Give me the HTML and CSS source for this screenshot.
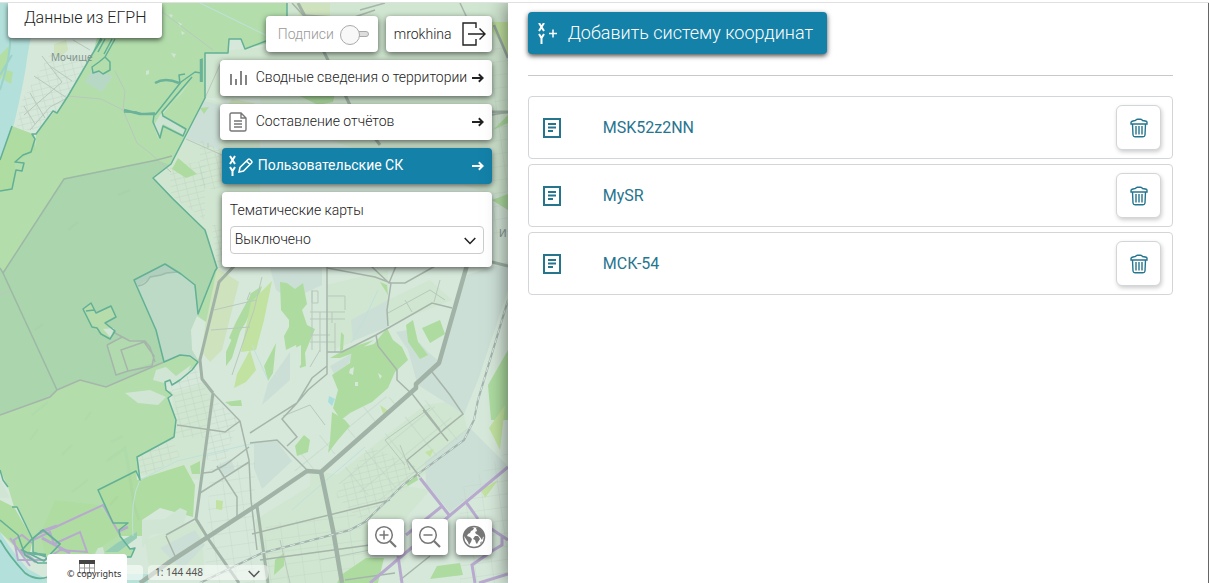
FILE: index.html
```html
<!DOCTYPE html>
<html lang="ru">
<head>
<meta charset="utf-8">
<meta name="viewport" content="width=device-width, initial-scale=1">
<title>Пользовательские СК</title>
<link rel="stylesheet" href="styles.css">
</head>
<body>
<svg class="sprite" aria-hidden="true">
  <symbol id="arrow" viewBox="0 0 12 10"><path d="M0 5H10.500M6.800 1.200L10.700 5L6.800 8.800" fill="none" stroke="currentColor" stroke-width="1.900"/></symbol>
  <symbol id="chevron" viewBox="0 0 12 8"><path d="M.7 1L6 6.500L11.300 1" fill="none" stroke="currentColor" stroke-width="1.500"/></symbol>
  <symbol id="sheet" viewBox="0 0 18 20"><path d="M1 1H17V19H1Z" fill="none" stroke="currentColor" stroke-width="2"/><path d="M5 6H13M5 9.500H13M5 13H10" stroke="currentColor" stroke-width="2"/></symbol>
  <symbol id="trash" viewBox="0 0 18 20"><g fill="none" stroke="currentColor" stroke-width="1.400"><path d="M1 6V4.500Q1 3.500 3 3Q5 2.600 5.500 2.500Q6 1.200 7.500 1.200H10.500Q12 1.200 12.500 2.500Q16 3 16.500 3.400Q17 3.800 17 4.500V6Z"/><path d="M2.500 6L3 17Q3.200 18.800 5 18.800H13Q14.800 18.800 15 17L15.500 6"/><path d="M6 8V16.500M9 8V16.500M12 8V16.500"/></g></symbol>
</svg>
<div class="app">
  <section class="map" aria-label="Карта">
    <svg class="map-canvas" viewBox="0 3 508 580" preserveAspectRatio="xMinYMin slice" aria-hidden="true">
      <defs>
        <pattern id="grid" width="9" height="6" patternUnits="userSpaceOnUse" patternTransform="rotate(-14)"><path d="M0 0H9M0 0V6" stroke="#bccfbf" fill="none" stroke-width=".7"/></pattern>
        <pattern id="blocks" width="26" height="19" patternUnits="userSpaceOnUse" patternTransform="rotate(-39)"><path d="M0 0H26M0 0V19" stroke="#bdd2c1" fill="none"/></pattern>
        <pattern id="yards" width="17" height="13" patternUnits="userSpaceOnUse" patternTransform="rotate(-8)"><path d="M0 0H17M0 0V13" stroke="#c2d4c5" fill="none" stroke-width=".8"/></pattern>
      </defs>
      <path d="M0 3H508V583H0Z" fill="#d6e8da"/>
      <g fill="#d0e6d0">
        <path d="M288 3H508V200L205 98V53L288 44ZM172 393L205 383L215 395L206 440L174 437ZM205 98L153 178L217 268H260V98Z"/>
        <path d="M330 480L425 405L460 400L470 440L350 530H330ZM175 395L215 395L203 480L140 475L137 457L174 437ZM310 583V470L430 490L350 583ZM145 540L200 520L205 575H150ZM327 285L388 270V325L345 345L327 352ZM388 300L430 280L452 300L388 325ZM255 520L320 480L335 583H265Z"/>
      </g>
      <g fill="#ccdfd6">
        <path d="M204 101L220 105V150L186 139Z"/>
        <path d="M270 268H322V285L290 300L276 290ZM351 320L388 300L388 327L353 341ZM467 275L508 262V290L478 380L464 414L418 385L438 362Z"/>
        <path d="M254 442L276 440L292 461L262 489L254 468ZM425 462L470 428L508 466L450 512L426 484Z"/>
        <path d="M268 383L290 352V380L262 405ZM396 332L408 330L428 352L440 362L417 383L408 350ZM160 548L195 530L205 545L182 570ZM218 465L231 459L235 470L223 476ZM330 366L358 350L348 364L334 374Z"/>
      </g>
      <g fill="#cde2bd">
        <path d="M217 268L239 282L222 350L210 362L200 350L198 314ZM232 99L254 103V112L226 108ZM295 3H330V16H300ZM54 44L66 40L68 50L59 58L54 54Z"/>
      </g>
      <g fill="url(#grid)">
        <path d="M176 392L208 394L238 420L225 462L206 460V438L174 437ZM138 457L172 439L180 456L153 473L141 475ZM170 383L194 366L205 383V410L178 412ZM170 168L205 160V220L171 195ZM212 225H222V268H217ZM22 100L50 54L90 58L67 98L40 130H16Z"/>
        <path d="M335 495L370 447L420 468L410 485L360 520ZM200 140L222 150V190L200 188Z"/>
      </g>
      <path d="M330 480L425 400L470 430L380 500ZM342 422L380 395L400 400L340 450L300 480L285 455Z" fill="url(#blocks)"/>
      <path d="M265 525L355 510L380 583H265ZM210 462H255V583H205ZM460 490L508 450V583H460ZM492 40H508V240H494Z" fill="url(#yards)"/>
      <path d="M0 3H39Q29 42 26 66Q23 86 14 124L0 160Z" fill="#b3e0db"/>
      <path d="M0 55L9 46L7 70L0 80ZM6 70L13 72L11 84L4 80Z" fill="#b3dfa5"/>
      <path d="M0 532Q12 552 28 569Q48 580 52 583H0Z" fill="#b3e0db"/>
      <path d="M52 574H148V583H40Z" fill="#b8e2d8"/>
      <path d="M10 25Q13 50 0 90M0 75L12 55" fill="none" stroke="#9bd2ca" stroke-width="2"/>

      <path d="M103 3L97 38L93 53L68 96L57 113L53 113L36 134L35 150L23 155L15 162V175L12 189L0 191V470L8 487L14 507L18 508L33 540V551L46 557L131 557L135 548L130 549L120 536L119 530L128 523H113L98 490L136 471L140 475L137 457L163 443L174 437L176 420L168 398L172 392L166 390L165 382L180 380L198 362L217 268L205 230L153 178L171 164L205 98V53L228 53L229 39H241L245 49L287 38V3Z" fill="#b3deac"/>
      <path d="M0 268L3 273L64 179L157 160L170 165L153 178L205 230L217 268L198 314L194 285L181 274L165 264L134 280L156 330L164 362L106 387L80 380L57 390L50 397L0 415Z" fill="#aad5ad"/>
      <path d="M107 345L122 338L147 342L155 362L128 371L116 375Z" fill="#b1dbae"/>
      <path d="M12 126L33 134L36 150L15 162V175L12 189L0 191V160ZM137 480L184 465L195 485L193 517L160 508L142 520L142 536L120 536L113 523L98 490L136 471ZM0 500L14 507L33 540L28 560L0 532ZM55 500L98 505L113 523L119 535L88 556L46 557L40 535Z" fill="#afdca0"/>
      <path d="M134 280L165 264L181 274L194 285L198 314L191 330L192 350L198 360L180 355L164 362L156 330Z" fill="#bcdac6"/>
      <path d="M191 330L197 316L206 322L202 348L198 360L192 350Z" fill="#d6e8da"/>
      <path d="M134 280L165 264L177 271L163 275L150 278L138 286Z" fill="#b1cfbd"/>
      <path d="M138 286Q146 285 150 277L161 275L166 273L177 272" fill="none" stroke="#9dbdab" stroke-width="1.500"/>
      <path d="M92 70L113 76L102 92L85 82Z" fill="#b7d8c4"/>
      <path d="M181 94L160 115L154 125L158 138L163 124L184 135L186 131L162 115L190 82Z" fill="#cbe3d0"/>
      <path d="M83 309L91 303L96 313L111 306L116 317L105 323L115 331L110 339L101 334L92 327Z" fill="#b5dcaa"/>
      <path d="M103 329L114 328L111 338ZM156 370L166 367L176 376L191 365L186 377L168 384L153 380ZM125 393L150 390L166 397L158 405L138 403ZM142 520L165 519L180 508L187 511L182 530L151 535L142 548ZM98 548L103 547L105 556H94ZM171 53L176 54L174 58ZM169 14L173 15L171 18ZM178 22L182 24L180 27ZM181 31L185 33L182 35ZM146 71L149 70V74L146 75ZM0 480L10 498H0Z" fill="#d0e5d3"/>
      <path d="M117 543L137 532L137 538L118 552L105 552Z" fill="#94cdb4"/>
      <path d="M107 461L125 448L129 471L134 505L139 520" fill="none" stroke="#a5cfa3" stroke-width="3" opacity=".3"/>
      <path d="M30 440L38 429M62 455L72 445M85 420L91 412M32 415L48 402M111 442L123 436M72 492L88 480M68 230L78 222M110 505L118 496M35 330L43 324M118 195L130 190" stroke="#a4cfa3" stroke-width="2" opacity=".25"/>

      <g fill="#aedca0">
        <path d="M280 282L287 283L295 289L303 283L307 304L302 310L307 325L315 329L305 353L306 366L300 368L296 345L286 350L284 336L289 327V320L281 310ZM250 294L262 286L258 300L252 310ZM236 322L250 296L255 300L246 322L234 342L229 338ZM226 352L236 330L240 332L232 358L226 366ZM264 366L276 343L273 373L268 381Z"/>
        <path d="M332 375L350 363L352 350L374 344L387 328L393 340L402 347L408 360L395 372L388 388L372 402L350 413L341 420L333 408L338 390ZM330 358L346 349L374 340L356 352L340 358Z"/>
        <path d="M422 328L440 320L445 334L430 343ZM406 325L413 320L418 342L428 355L420 359L408 342ZM341 332L344 335L343 350L340 352Z"/>
        <path d="M332 412L345 420L350 426L338 440L328 453L330 440ZM295 446L304 435L310 440L308 452L297 456ZM341 575L366 558H384L378 583H337ZM437 566L460 563L463 575L430 579ZM405 482L416 474L418 480L408 486ZM172 169L178 158L197 174L186 178ZM225 402L241 400L242 406L231 406ZM488 385L508 350V420H491ZM200 108L209 107L204 114ZM298 95L335 93L333 102L318 105ZM492 200L508 194V210ZM493 130L508 115V123ZM190 466L200 461V474H192ZM380 282L387 285L388 295ZM275 560L284 553V566L274 575Z"/>
      </g>
      <g fill="#c1e2a0">
        <path d="M251 302L272 281L264 320L256 350L241 352ZM237 374L250 350L256 370L246 382L234 388ZM425 452L434 449L430 457ZM481 490L498 480L485 498ZM489 428L505 405L500 450ZM487 22H508V55ZM216 500L223 501L222 510L216 509ZM380 405L390 412L384 416Z"/>
      </g>
      <path d="M350 369L354 367L353 375L349 373ZM355 382H358V386H355ZM378 373L382 376L380 379ZM290 351L301 345L301 365L294 370ZM330 399L335 393L333 408Z" fill="#d6e8da"/>
      <path d="M329 396L335 399L332 406L328 402Z" fill="#a9dedd"/>
      <path d="M133 536Q130 500 140 480L177 461L255 443M292 510L309 495L365 447M268 380L252 345M351 343L365 318L378 290M200 3L292 48" fill="none" stroke="#bfe1db"/>

      <g fill="none" stroke="#b8c9bc" stroke-width="1">
        <path d="M68 96L101 99L123 110L137 143L150 153L171 172M115 71L125 91L123 110M67 98L50 107L30 130M73 40L90 50M157 8L213 50M205 98L222 60M186 139L222 155M208 143V148M0 295L10 291M312 290V350M318 291V303H312V291ZM328 296H345V310M310 312H345M310 319H345M320 312V352M332 312V323M310 335H330M310 342H335M335 323V352M310 367L320 350M388 313L430 290L445 300M405 300L412 312M440 280L434 302M405 465L385 440L430 408M400 445L410 470M283 416L310 405L325 425M280 540L290 583M320 560L395 545M250 292L247 300M262 277L254 310M214 310L256 300M211 330L250 327M232 375L254 310"/>
        <path d="M42 56L62 82L24 115M34 76L67 98M30 93L45 118M50 66L72 81M24 106L35 124"/>
      </g>
      <g fill="none" stroke="#a6b5aa" stroke-width="1.500">
        <path d="M107 345L122 337L130 341H145L150 347L155 362M107 345L116 375L128 371L121 350L144 342L154 356L152 366L128 371M113 332L130 341"/>
        <path d="M0 415L50 397L57 390L80 380L106 387L164 362"/>
        <path d="M3 273L57 390M0 268L3 273L64 179L157 160L172 156" stroke="#9db8a5"/>
        <path d="M177 425L225 432L240 421M203 473L212 472L225 465L249 447M200 493L249 462M217 466L237 497V517M213 393L240 421L249 460L251 500L257 550M250 443L277 440L308 471M166 535L195 519M166 536L175 556"/>
        <path d="M327 260V374L308 390L297 403L250 433M327 268L375 277L391 283L405 283L437 265M371 266L389 283L396 266M391 283L387 310L388 326M327 352H342L376 335L432 303L452 308M376 335L378 346L397 370V380L413 395L440 430M327 366L312 378L297 403L282 419L297 437L287 446M432 372L450 395L463 414L443 430M423 410L448 441M463 414L407 460L420 477M252 534L390 500M260 560L370 545M345 580L395 573M400 580L430 556"/>
        <path d="M292 3L303 15L335 17M340 22L375 10M360 10L385 3M460 3L482 50M492 115L508 112"/>
      </g>
      <g fill="none" stroke="#a1b3a6" stroke-linejoin="round">
        <path d="M467 265L439 363L416 384L416 388L321 472L307 471L257 505L168 563L140 583" stroke-width="4.500"/>
        <path d="M321 472L333 530L342 583" stroke-width="4.500"/>
        <path d="M213 393L196 519L209 540L239 583M257 506L268 583M213 393L202 379L200 360L219 282L238 262M298 3L323 50L350 105L380 145M492 112H508M492 262L508 266" stroke-width="3"/>
      </g>
      <path d="M508 300L478 400L474 420L464 440L403 485L365 522L350 530L320 538L262 553L200 583" fill="none" stroke="#a3b4ae" stroke-width="2"/>
      <path d="M508 300L478 400L474 420L464 440L403 485L365 522L350 530L320 538L262 553L200 583" fill="none" stroke="#dbe9e0" stroke-dasharray="5 5"/>
      <path d="M494 25L508 58" stroke="#9aaba4" stroke-width="2.500"/>

      <g fill="none" stroke="#b7aace" stroke-width="2">
        <path d="M38 534L60 525L103 505L120 535M33 540L50 532L54 544L80 532L87 552L60 550L45 560L18 560L14 540L22 535L32 543M10 538L30 566"/>
        <path d="M420 478L449 515M508 467L448 517L370 583M441 507L406 535M466 502L478 519M398 556L402 583M475 583L472 565L492 551L502 545V535M490 528L508 540M479 583L508 574" stroke-width="3"/>
      </g>
      <path d="M40 532L57 526M42 538L70 553M20 550L36 562M119 531L128 527" stroke="#b7aace" stroke-width="3"/>
      <g fill="none" stroke="#62b096" stroke-width="1.500" stroke-linejoin="round">
        <path d="M101 38L93 53L68 96L57 113L53 111L36 134L32 134L35 139L31 152L23 155L15 162L24 163L22 171L16 170L12 189L0 191M115 39L105 57L110 62V70L103 74L99 71L93 73L92 67L99 62L105 57M98 52L105 39M104 54L112 39M93 53L102 39"/>
        <path d="M287 3V18M266 41L245 49L241 39H229L228 53H205V98L171 164L153 178L173 199L205 230L217 268L215 271L198 314L195 285L181 274L165 264L134 280L156 330L164 362L180 355L190 356L198 362L192 370L180 380L172 385L170 380L165 382L166 390L172 395L168 398L176 420L174 437L163 443L137 457L140 480L136 471L98 490L113 523L128 523L119 530L120 536L130 549L135 548L131 557H100"/>
        <path d="M181 82L195 72L201 73L202 59V82M155 115L181 82M124 112L136 112L142 114L155 113M180 84L179 75L185 74M154 115L153 122L160 138L163 126L183 136L186 129L163 116L162 112L192 77"/>
        <path d="M83 309L91 303L96 313L111 306L116 317L105 323L115 331L110 339L101 334L97 328L92 327ZM86 311L94 310"/>
        <path d="M0 470L3 480L8 487M12 507H17L33 540L33 552L46 557M0 520L18 535L25 555L38 563H48M12 126L0 160"/>
        <path d="M0 540Q9 556 25 573Q36 581 48 577M31 540L43 530L60 544L44 561L22 550Z" stroke-width="1.800"/>
      </g>
      <path d="M155 83Q165 77 179 83M124 110L140 114L155 114M28 553L46 555M201 59V82" stroke="#6bb29a" stroke-width="2.500" fill="none"/>
      <text class="place" x="51" y="61">Мочище</text>
      <text class="place" x="499" y="237">И</text>
    </svg>

    <div class="map-ui">
      <div class="top-bar">
        <button class="tab">Данные из ЕГРН</button>
        <div class="tools">
          <div class="tools-head">
            <label class="float toggle">Подписи <input class="switch" type="checkbox" disabled></label>
            <button class="float user">mrokhina
              <svg width="24" height="24" viewBox="0 0 24 24" fill="none" stroke="currentColor" stroke-width="1.400" aria-hidden="true"><path d="M14 6V1H1V23H14V17M6 12H23M17.500 6.500L23 12L17.500 17.500"/></svg>
            </button>
          </div>
          <button class="float row">
            <svg class="row-icon" viewBox="0 0 18 18" aria-hidden="true"><path d="M2 5V16M7 10V16M12 2V16M17 6V16" stroke="currentColor" stroke-width="1.800"/></svg>
            <span class="row-text">Сводные сведения о территории</span><svg class="arrow" aria-hidden="true"><use href="#arrow"/></svg>
          </button>
          <button class="float row">
            <svg class="row-icon" viewBox="0 0 18 20" fill="none" stroke="currentColor" stroke-width="1.400" aria-hidden="true"><path d="M2.500 1H12L17 6V17.500Q17 19 15.500 19H2.500Q1 19 1 17.500V2.500Q1 1 2.500 1ZM12 1V6H17M5 9H13M5 12H13M5 15H13"/></svg>
            <span class="row-text">Составление отчётов</span><svg class="arrow" aria-hidden="true"><use href="#arrow"/></svg>
          </button>
          <button class="float row active">
            <svg class="edit-icon" viewBox="0 0 24 22" fill="none" stroke="currentColor" stroke-width="1.500" aria-hidden="true"><path d="M1 1L6 9M6 1L1 9" stroke-width="2"/><path d="M1 12L3.500 16L6 12M3.500 16V21" stroke-width="2"/><path d="M10 17L11 12.500L19 4.500Q20 3.500 21 4.500L22.500 6Q23.500 7 22.500 8L14.500 16ZM17.500 6L21 9.500"/></svg>
            <span class="row-text">Пользовательские СК</span><svg class="arrow" aria-hidden="true"><use href="#arrow"/></svg>
          </button>
          <div class="float themes">
            <label for="theme">Тематические карты</label>
            <div class="select-wrap">
              <select id="theme"><option>Выключено</option></select>
              <svg class="chevron" aria-hidden="true"><use href="#chevron"/></svg>
            </div>
          </div>
        </div>
      </div>
      <div class="bottom">
        <div class="zoom-bar">
          <button class="float square" aria-label="Приблизить"><svg viewBox="0 0 24 24" aria-hidden="true"><circle cx="10" cy="10" r="8.300"/><path d="M5.500 10H14.500M10 5.500V14.500"/><path d="M16 16L22 22" stroke-width="2.200"/></svg></button>
          <button class="float square" aria-label="Отдалить"><svg viewBox="0 0 24 24" aria-hidden="true"><circle cx="10" cy="10" r="8.300"/><path d="M5.500 10H14.500"/><path d="M16 16L22 22" stroke-width="2.200"/></svg></button>
          <button class="float square" aria-label="Вся карта"><svg viewBox="0 0 24 24" aria-hidden="true"><circle cx="12" cy="12" r="10.500"/><path class="land" d="M2 8L5 4L9 2L12 3L11 5L9 6L8 8L6 9L5 11L8 12L10 14L9 17L7 20L6 17L4 14L2 11ZM14 3L18 3L21 7L23 11L21 12L20 15L18 12L16 10L14 9L13 7L15 6ZM13 11L16 11L18 14L16 17L15 19L14 18L13 15L11 14ZM18 18L20 16L19 19Z"/></svg></button>
        </div>
        <div class="status">
          <div class="copy"><button class="copy-card" aria-label="Таблица"><svg width="16" height="14" viewBox="0 0 16 14" aria-hidden="true"><path d="M.5 1H15.500V13H.5ZM.5 8H15.500M5.500 4V13M10.500 4V13" fill="none" stroke="#999"/><path d="M0 0H16V4H0Z" fill="#444"/></svg></button><span class="copy-text">© copyrights</span></div>
          <div class="scale"><select aria-label="Масштаб"><option>1: 144 448</option></select><svg class="chevron" aria-hidden="true"><use href="#chevron"/></svg></div>
        </div>
      </div>
    </div>
  </section>

  <main class="panel">
    <button class="add">
      <svg width="20" height="21" viewBox="0 0 20 21" fill="none" stroke="currentColor" aria-hidden="true"><path d="M1 0L6 8M6 0L1 8M1 11L3.500 15L6 11M3.500 15V21" stroke-width="2"/><path d="M11 10.500H19M15 6.500V14.500" stroke-width="1.500"/></svg>
      Добавить систему координат
    </button>
    <hr class="rule">
    <ul class="list">
      <li class="item"><svg class="sheet" aria-hidden="true"><use href="#sheet"/></svg><span class="name">MSK52z2NN</span><button class="delete" aria-label="Удалить MSK52z2NN"><svg aria-hidden="true"><use href="#trash"/></svg></button></li>
      <li class="item"><svg class="sheet" aria-hidden="true"><use href="#sheet"/></svg><span class="name">MySR</span><button class="delete" aria-label="Удалить MySR"><svg aria-hidden="true"><use href="#trash"/></svg></button></li>
      <li class="item"><svg class="sheet" aria-hidden="true"><use href="#sheet"/></svg><span class="name">МСК-54</span><button class="delete" aria-label="Удалить МСК-54"><svg aria-hidden="true"><use href="#trash"/></svg></button></li>
    </ul>
  </main>
</div>
</body>
</html>
```
FILE: styles.css
```css
* { box-sizing: border-box; }
body {
  margin: 0;
  padding-top: 2px;
  min-height: 100vh;
  display: flex;
  background: #fff;
  color: #222;
  font: 300 14px/18px Roboto, "Noto Sans", sans-serif;
}
button, select { font: inherit; color: inherit; border: 0; padding: 0; background: none; }
svg { display: block; flex: none; }
.sprite { position: absolute; width: 0; height: 0; }

.app { flex: 1; display: grid; grid-template-columns: 42% 1fr; overflow: hidden; border-top: 1px solid #e0e0e0; }

.map { position: relative; display: flex; overflow: hidden; background: #d6e8da; }
.map-canvas { position: absolute; inset: 0; width: 100%; height: 100%; }
.place { font: 400 10px "Noto Sans", sans-serif; fill: #82958f; stroke: none; }
.map-ui { position: relative; flex: 1; display: flex; flex-direction: column; justify-content: space-between; }
.top-bar { display: flex; justify-content: space-between; align-items: flex-start; padding: 0 16px 0 8px; }
.tab {
  height: 35px;
  padding: 0 16px 6px;
  background: #fff;
  border-radius: 0 0 4px 4px;
  box-shadow: 0 2px 5px rgba(0, 0, 0, .6);
  font-size: 16px;
}
.tools { display: flex; flex-direction: column; align-items: flex-end; gap: 8px; width: 272px; padding-top: 13px; }
.tools-head { display: flex; gap: 8px; }
.float { background: #fff; border-radius: 4px; box-shadow: 0 2px 6px rgba(0, 0, 0, .6); }
.toggle { display: flex; align-items: center; gap: 6px; width: 112px; height: 36px; padding-left: 12px; color: #999; }
.switch { appearance: none; position: relative; width: 30px; height: 18px; margin: 0; }
.switch::before { content: ""; position: absolute; inset: 6px 1px 6px 12px; border: 1px solid #aaa; border-radius: 3px; background: #ddd; }
.switch::after { content: ""; position: absolute; left: 0; top: 0; width: 18px; height: 18px; border: 1px solid #aaa; border-radius: 50%; background: #f8f8f8; }
.user { display: flex; align-items: center; justify-content: space-between; width: 106px; height: 36px; padding: 0 6px 0 8px; }
.row { display: flex; align-items: center; width: 100%; height: 36px; padding: 0 8px 0 9px; text-align: left; }
.row-icon { width: 18px; height: 20px; margin-right: 9px; color: #777; }
.row-text { flex: 1; white-space: nowrap; padding-bottom: 2px; }
.arrow { width: 12px; height: 10px; }
.active { width: 270px; padding-left: 7px; background: #1481a8; color: #fff; font-weight: 400; }
.edit-icon { width: 24px; height: 22px; margin-right: 5px; }
.themes { width: 270px; padding: 9px 8px 13px; }
.themes label { display: block; }
.select-wrap { position: relative; margin-top: 7px; }
.select-wrap select { display: block; appearance: none; width: 100%; height: 28px; padding: 0 24px 2px 4px; border: 1px solid #ccc; border-radius: 4px; background: #fff; }
.chevron { position: absolute; right: 8px; top: 11px; width: 12px; height: 8px; pointer-events: none; }

.zoom-bar { display: flex; justify-content: flex-end; gap: 8px; padding-right: 16px; margin-bottom: -1px; }
.square { width: 36px; height: 36px; display: grid; place-items: center; }
.square svg { width: 24px; height: 24px; fill: none; stroke: #777; stroke-width: 1.5; }
.square .land { fill: #777; stroke: none; }
.status { display: flex; align-items: flex-start; gap: 5px; padding-left: 47px; font: 400 10px/15px "Noto Sans", sans-serif; color: #555; }
.copy { position: relative; width: 96px; height: 29px; display: flex; align-items: center; padding-left: 20px; }
.copy::before { content: ""; position: absolute; inset: 11px 0 3px; border-radius: 4px; background: rgba(255, 255, 255, .55); }
.copy-card { position: absolute; left: 0; top: 0; width: 80px; height: 29px; padding: 6px 32px 9px; background: #fff; border-radius: 4px 4px 0 0; }
.copy-text { position: relative; padding-top: 10px; font-size: 9px; white-space: nowrap; color: #333; }
.scale { position: relative; width: 120px; margin-top: 11px; border-radius: 4px; background: rgba(255, 255, 255, .5); }
.scale select { display: block; appearance: none; width: 100%; height: 15px; padding-left: 7px; }
.scale .chevron { top: 5px; }

.panel { position: relative; padding: 9px 35px 20px 20px; background: #fff; border-right: 1px solid #666; box-shadow: 0 0 20px rgba(0, 0, 0, .55); }
.add {
  display: flex;
  align-items: center;
  gap: 10px;
  height: 42px;
  padding: 0 14px 0 10px;
  border-radius: 4px;
  background: #1481a8;
  color: #fff;
  box-shadow: 0 2px 5px rgba(0, 0, 0, .7);
  font-size: 18px;
}
.rule { margin: 21px 0 20px; border: 0; border-top: 1px solid #c8c8c8; }
.list { display: grid; gap: 5px; margin: 0; padding: 0; list-style: none; }
.item { display: flex; align-items: center; height: 63px; padding: 0 11px 0 14px; border: 1px solid #d3d6d8; border-radius: 4px; color: #26758f; }
.sheet { width: 18px; height: 20px; }
.name { flex: 1; padding-left: 42px; font-size: 16px; font-weight: 400; }
.delete { width: 45px; height: 45px; display: grid; place-items: center; border: 1px solid #d3d6d8; border-radius: 6px; background: #fff; box-shadow: 1px 2px 4px rgba(0, 0, 0, .2); }
.delete svg { width: 18px; height: 20px; }
```
